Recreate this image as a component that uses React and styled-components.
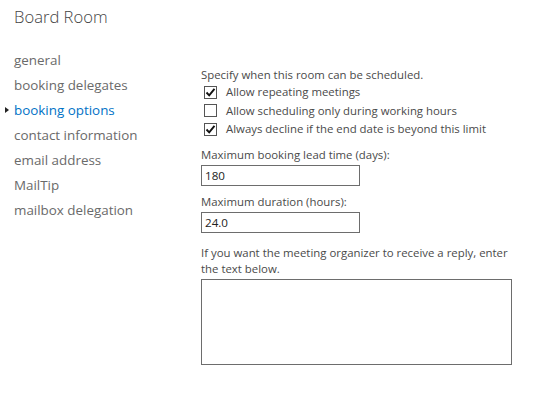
import React from "react";
import styled, { createGlobalStyle } from "styled-components";

const Global = createGlobalStyle`
  html, body { margin: 0; padding: 0; background: #fff; }
  body { font-family: "Open Sans", "Liberation Sans", sans-serif; }
`;

const Page = styled.div`
  width: 538px;
  height: 400px;
  background: #fff;
  overflow: hidden;
`;

const Title = styled.h1`
  margin: 0;
  padding: 6px 0 0 14px;
  height: 22px;
  font-size: 16.6px;
  line-height: 22px;
  font-weight: 300;
  color: #444;
`;

const Body = styled.div`
  display: grid;
  grid-template-columns: 201px 1fr;
`;

const Nav = styled.ul`
  list-style: none;
  margin: 0;
  padding: 20px 0 0 14px;
`;

const NavItem = styled.li`
  position: relative;
  font-size: 13.4px;
  line-height: 25px;
  height: 25px;
  white-space: nowrap;
  color: ${(p) => (p.$active ? "#0072c6" : "#6a6a6a")};
  &::before {
    content: "";
    display: ${(p) => (p.$active ? "block" : "none")};
    position: absolute;
    left: -9px;
    top: 9px;
    border-left: 4px solid #222;
    border-top: 3.5px solid transparent;
    border-bottom: 3.5px solid transparent;
  }
`;

const Content = styled.div`
  padding-top: 38.5px;
  display: flex;
  flex-direction: column;
  font-size: 11.4px;
  color: #4a4a4a;
`;

const Text = styled.div`
  line-height: 16px;
  margin-top: ${(p) => p.$gap || 0}px;
  width: 318px;
`;

const CheckList = styled.div`
  display: flex;
  flex-direction: column;
  margin-top: 0.5px;
`;

const CheckRow = styled.label`
  display: flex;
  align-items: center;
  height: 18.5px;
  padding-left: 3px;
  gap: 9px;
  line-height: 16px;
`;

const Box = styled.span`
  box-sizing: border-box;
  width: 13px;
  height: 13px;
  border: 1px solid #555;
  background: #fff;
  display: flex;
  align-items: center;
  justify-content: center;
  flex: none;
`;

const Input = styled.div`
  box-sizing: border-box;
  margin-top: 2px;
  width: 159px;
  height: 21px;
  border: 1px solid #6d6d6d;
  padding: 0 3px;
  font-size: 11.6px;
  line-height: 19px;
  color: #222;
`;

const TextArea = styled.div`
  box-sizing: border-box;
  margin-top: 2px;
  width: 311px;
  height: 86px;
  border: 1px solid #6d6d6d;
`;

const Check = ({ checked, children }) => (
  <CheckRow>
    <Box>
      {checked && (
        <svg width="11" height="11" viewBox="0 0 11 11">
          <path d="M1.5 5.5 L4.2 8.3 L9.5 1.8" fill="none" stroke="#111" strokeWidth="1.9" />
        </svg>
      )}
    </Box>
    {children}
  </CheckRow>
);

const navItems = [
  "general",
  "booking delegates",
  "booking options",
  "contact information",
  "email address",
  "MailTip",
  "mailbox delegation",
];

export default function App() {
  return (
    <Page>
      <Global />
      <Title>Board Room</Title>
      <Body>
        <Nav>
          {navItems.map((n) => (
            <NavItem key={n} $active={n === "booking options"}>
              {n}
            </NavItem>
          ))}
        </Nav>
        <Content>
          <Text>Specify when this room can be scheduled.</Text>
          <CheckList>
            <Check checked>Allow repeating meetings</Check>
            <Check>Allow scheduling only during working hours</Check>
            <Check checked>Always decline if the end date is beyond this limit</Check>
          </CheckList>
          <Text $gap={8}>Maximum booking lead time (days):</Text>
          <Input>180</Input>
          <Text $gap={8}>Maximum duration (hours):</Text>
          <Input>24.0</Input>
          <Text $gap={12}>
            If you want the meeting organizer to receive a reply, enter the text below.
          </Text>
          <TextArea />
        </Content>
      </Body>
    </Page>
  );
}
